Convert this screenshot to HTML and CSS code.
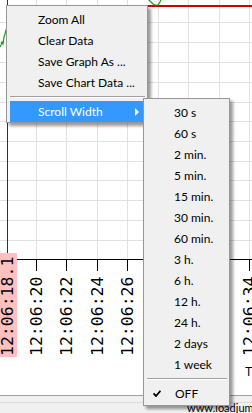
FILE: index.html
```html
<!DOCTYPE html>
<html lang="en">

<head>
    <meta charset="UTF-8">
    <title>Chart</title>
    <link rel="stylesheet" href="styles.css">
</head>

<body>
    <div class="window">
        <div class="chart">
            <svg class="plot" width="252" height="395" viewBox="0 0 252 395">
                <!-- grid -->
                <g class="grid">
                    <line x1="0" y1="22.5" x2="252" y2="22.5" />
                    <line x1="0" y1="42.5" x2="252" y2="42.5" />
                    <line x1="0" y1="62.5" x2="252" y2="62.5" />
                    <line x1="0" y1="82.5" x2="252" y2="82.5" />
                    <line x1="0" y1="102.5" x2="252" y2="102.5" />
                    <line x1="0" y1="121.5" x2="252" y2="121.5" />
                    <line x1="0" y1="141.5" x2="252" y2="141.5" />
                    <line x1="0" y1="161.5" x2="252" y2="161.5" />
                    <line x1="0" y1="180.5" x2="252" y2="180.5" />
                    <line x1="0" y1="200.5" x2="252" y2="200.5" />
                    <line x1="0" y1="220.5" x2="252" y2="220.5" />
                    <line x1="0" y1="240.5" x2="252" y2="240.5" />
                    <line x1="36.5" y1="0" x2="36.5" y2="259" />
                    <line x1="66.5" y1="0" x2="66.5" y2="259" />
                    <line x1="97.5" y1="0" x2="97.5" y2="259" />
                    <line x1="127.5" y1="0" x2="127.5" y2="259" />
                    <line x1="158.5" y1="0" x2="158.5" y2="259" />
                    <line x1="188.5" y1="0" x2="188.5" y2="259" />
                    <line x1="219.5" y1="0" x2="219.5" y2="259" />
                    <line x1="249.5" y1="0" x2="249.5" y2="259" />
                </g>

                <!-- alarm line + data -->
                <line class="alarm" x1="140" y1="6" x2="252" y2="6" />
                <polyline class="data" points="0,47 1,45 2,42 3,44 4,37 5,34 6,30 8,26" />
                <polyline class="data" points="146,-2 149,0 151,2 153,4 155,5 158,5 160,2 161,-1" />

                <!-- cursor -->
                <line class="cursor" x1="7.5" y1="0" x2="7.5" y2="253" />

                <!-- time axis -->
                <line class="axis" x1="0" y1="259.5" x2="252" y2="259.5" />
                <g class="axis">
                    <line x1="36.5" y1="259" x2="36.5" y2="271" />
                    <line x1="66.5" y1="259" x2="66.5" y2="271" />
                    <line x1="97.5" y1="259" x2="97.5" y2="271" />
                    <line x1="127.5" y1="259" x2="127.5" y2="271" />
                    <line x1="158.5" y1="259" x2="158.5" y2="271" />
                    <line x1="188.5" y1="259" x2="188.5" y2="271" />
                    <line x1="219.5" y1="259" x2="219.5" y2="271" />
                    <line x1="249.5" y1="259" x2="249.5" y2="271" />
                </g>
                <rect class="cursor-label" x="0" y="253" width="17" height="104" />
                <g class="ticks">
                    <text transform="translate(13,356) rotate(-90)">12:06:18.1</text>
                    <text transform="translate(41.7,356) rotate(-90)">12:06:20</text>
                    <text transform="translate(71.7,356) rotate(-90)">12:06:22</text>
                    <text transform="translate(102.7,356) rotate(-90)">12:06:24</text>
                    <text transform="translate(132.7,356) rotate(-90)">12:06:26</text>
                    <text transform="translate(163.7,356) rotate(-90)">12:06:28</text>
                    <text transform="translate(193.7,356) rotate(-90)">12:06:30</text>
                    <text transform="translate(224.7,356) rotate(-90)">12:06:32</text>
                    <text transform="translate(254.5,356) rotate(-90)">12:06:34</text>
                </g>
                <text class="axis-title" x="245" y="376">Time</text>
            </svg>
        </div>
        <div class="gap"></div>
        <div class="status">www.loadjump.com</div>

        <!-- context menu -->
        <div class="menu main-menu">
            <div class="item">Zoom All</div>
            <div class="item">Clear Data</div>
            <div class="item">Save Graph As ...</div>
            <div class="item">Save Chart Data ...</div>
            <div class="sep"></div>
            <div class="item active">Scroll Width<span class="arrow"></span></div>
        </div>

        <div class="menu sub-menu">
            <div class="item">30 s</div>
            <div class="item">60 s</div>
            <div class="item">2 min.</div>
            <div class="item">5 min.</div>
            <div class="item">15 min.</div>
            <div class="item">30 min.</div>
            <div class="item">60 min.</div>
            <div class="item">3 h.</div>
            <div class="item">6 h.</div>
            <div class="item">12 h.</div>
            <div class="item">24 h.</div>
            <div class="item">2 days</div>
            <div class="item">1 week</div>
            <div class="sep"></div>
            <div class="item checked">
                <svg class="check" width="8" height="7" viewBox="0 0 8 7">
                    <path d="M0.5 3.5 L3 6 L7.5 0.8" />
                </svg>OFF
            </div>
        </div>
    </div>
</body>

</html>
```

FILE: styles.css
```css
* {
    margin: 0;
    padding: 0;
    box-sizing: border-box;
}

body {
    background-color: #ffffff;
    font-family: Lato, "Noto Sans", sans-serif;
}

.window {
    width: 252px;
    height: 413px;
    overflow: hidden;
    position: relative;
    display: flex;
    flex-direction: column;
}

.chart {
    height: 396px;
    border-bottom: 1px solid #a0a0a0;
    background-color: #ffffff;
}

.plot {
    display: block;
}

.grid line {
    stroke: #e1e1e1;
    stroke-width: 1;
    shape-rendering: crispEdges;
}

.alarm {
    stroke: #d00000;
    stroke-width: 2;
}

.data {
    fill: none;
    stroke: #1a9a1a;
    stroke-width: 1.2;
}

.cursor {
    stroke: #a00000;
    stroke-width: 1;
    shape-rendering: crispEdges;
}

.axis,
.axis line {
    stroke: #000000;
    stroke-width: 1;
    shape-rendering: crispEdges;
}

.cursor-label {
    fill: #ffc0c0;
}

.ticks text {
    font-family: "DejaVu Sans Mono", monospace;
    font-size: 16.5px;
    fill: #000000;
}

.axis-title {
    font-family: "Liberation Sans", Arial, sans-serif;
    font-size: 12px;
    fill: #000000;
}

.gap {
    height: 7px;
    background-color: #f0f0f0;
}

.status {
    flex: 1;
    background-color: #f0f0f0;
    border-top: 1px solid #dadada;
    padding-left: 187px;
    font-size: 11px;
    line-height: 10px;
    color: #000000;
    white-space: nowrap;
}

/* popup menus */
.menu {
    position: absolute;
    background-color: #f0f0f0;
    border: 1px solid #979797;
    box-shadow: 3px 3px 3px rgba(0, 0, 0, 0.4);
    font-size: 12px;
    color: #000000;
}

.main-menu {
    left: 6px;
    top: 5px;
    width: 142px;
    padding: 3px 2px 0;
}

.sub-menu {
    left: 143px;
    top: 98px;
    width: 87px;
    padding: 3px 2px 1px;
}

.item {
    height: 21px;
    line-height: 21px;
    padding-left: 28px;
    display: flex;
    align-items: center;
    white-space: nowrap;
}

.main-menu .item {
    margin-left: 1px;
}

.item.active {
    background-color: #3399ff;
    color: #ffffff;
}

.arrow {
    margin-left: auto;
    margin-right: 6px;
    width: 0;
    height: 0;
    border-left: 4px solid #ffffff;
    border-top: 4px solid transparent;
    border-bottom: 4px solid transparent;
}

.sep {
    margin: 3px 0 3px 1px;
    border-top: 1px solid #a0a0a0;
    border-bottom: 1px solid #ffffff;
}

.item.checked {
    padding-left: 7px;
}

.check {
    margin-right: 14px;
    fill: none;
    stroke: #000000;
    stroke-width: 1.8;
}
```
